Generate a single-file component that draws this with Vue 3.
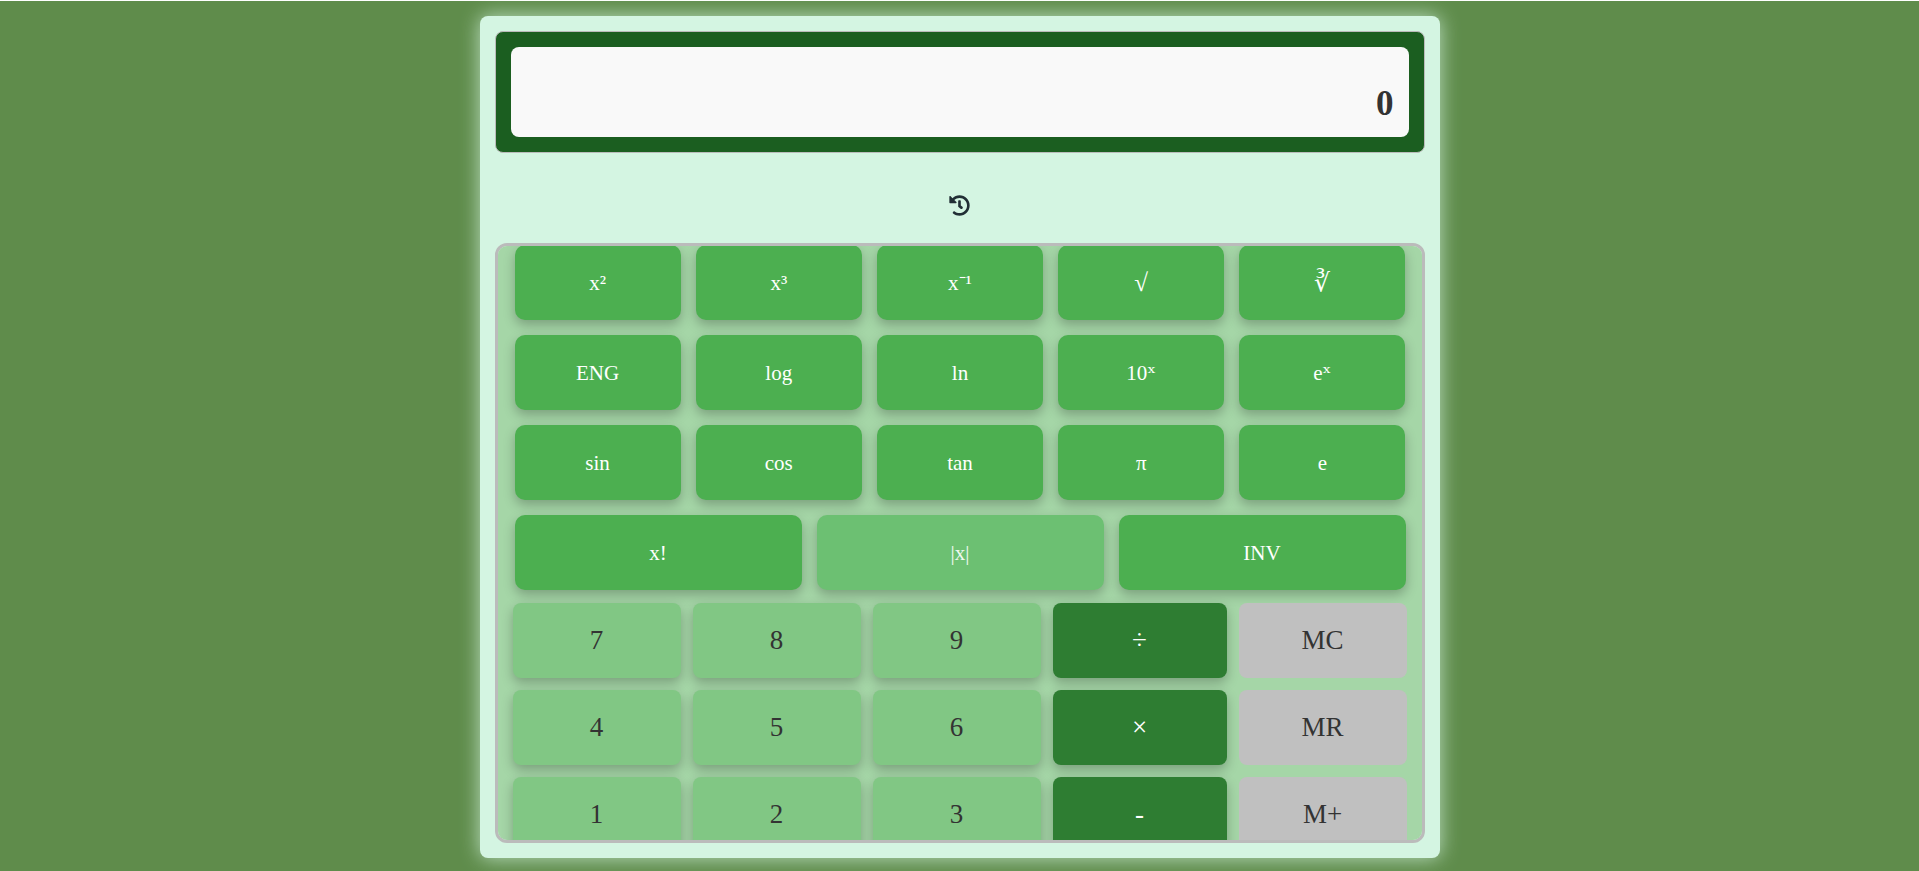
<script setup>
import { onMounted, ref } from 'vue'

const display = ref('0')
const keypad = ref(null)

const scientificKeys = [
  { label: 'x²', name: 'square' },
  { label: 'x³', name: 'cube' },
  { label: 'x⁻¹', name: 'inverse' },
  { label: '√', name: 'square root', root: true },
  { label: '∛', name: 'cube root', root: true },
  { label: 'ENG', name: 'engineering notation' },
  { label: 'log', name: 'log' },
  { label: 'ln', name: 'ln' },
  { label: '10', power: 'ˣ', name: 'ten to the x' },
  { label: 'e', power: 'ˣ', name: 'e to the x' },
  { label: 'sin', name: 'sin' },
  { label: 'cos', name: 'cos' },
  { label: 'tan', name: 'tan' },
  { label: 'π', name: 'pi' },
  { label: 'e', name: 'e' },
]

const mainKeys = [
  ['7', 'digit'], ['8', 'digit'], ['9', 'digit'], ['÷', 'operator'], ['MC', 'memory'],
  ['4', 'digit'], ['5', 'digit'], ['6', 'digit'], ['×', 'operator'], ['MR', 'memory'],
  ['1', 'digit'], ['2', 'digit'], ['3', 'digit'], ['-', 'operator'], ['M+', 'memory'],
]

function press(key, kind) {
  if (kind === 'digit') display.value = display.value === '0' ? key : display.value + key
}

onMounted(() => {
  keypad.value.scrollTop = 16
})
</script>

<template>
  <div class="page">
    <main class="calculator">
      <div class="display">
        <output class="screen">{{ display }}</output>
      </div>

      <div class="toolbar">
        <button class="history" type="button" aria-label="History">
          <svg viewBox="0 0 512 512" aria-hidden="true">
            <path d="M504 255.531c.253 136.64-111.18 248.372-247.82 248.468-59.015.042-113.223-20.53-155.822-54.911-11.077-8.94-11.905-25.541-1.839-35.607l11.267-11.267c8.609-8.609 22.353-9.551 31.891-1.984C173.062 425.135 212.781 440 256 440c101.705 0 184-82.311 184-184 0-101.705-82.311-184-184-184-48.814 0-93.149 18.969-126.068 49.932l50.754 50.754c10.08 10.08 2.941 27.314-11.313 27.314H24c-8.837 0-16-7.163-16-16V38.627c0-14.254 17.234-21.393 27.314-11.314l49.372 49.372C129.209 34.136 189.552 8 256 8c136.81 0 247.747 110.78 248 247.531zm-180.912 78.784l9.823-12.63c8.138-10.463 6.253-25.542-4.21-33.679L288 256.349V152c0-13.255-10.745-24-24-24h-16c-13.255 0-24 10.745-24 24v135.651l65.409 50.874c10.463 8.137 25.541 6.253 33.679-4.21z" />
          </svg>
        </button>
      </div>

      <div ref="keypad" class="keypad">
        <div class="scientific">
          <div class="row five">
            <button
              v-for="key in scientificKeys"
              :key="key.name"
              class="key function"
              :class="{ root: key.root }"
              type="button"
              :aria-label="key.name"
            >{{ key.label }}<span v-if="key.power" class="power">{{ key.power }}</span></button>
          </div>
          <div class="row three">
            <button class="key function" type="button">x!</button>
            <button class="key function active" type="button">|x|</button>
            <button class="key function" type="button">INV</button>
          </div>
        </div>
        <div class="main-keys">
          <button
            v-for="[key, kind] in mainKeys"
            :key="key"
            class="key"
            :class="kind"
            type="button"
            @click="press(key, kind)"
          >{{ key }}</button>
        </div>
      </div>
    </main>
  </div>
</template>

<style>
body {
  margin: 0;
  background: #5f8c4b;
}
</style>

<style scoped>
.page {
  box-sizing: border-box;
  min-height: 100vh;
  padding-top: 15px;
  border-top: 1px solid #fff;
  background: #5f8c4b;
  font-family: "Liberation Serif", "Times New Roman", serif;
}

.calculator {
  box-sizing: border-box;
  width: 100%;
  max-width: 960px;
  margin: 0 auto;
  padding: 15px;
  border-radius: 8px;
  background: #d4f5e2;
  box-shadow: 0 0 20px rgba(212, 245, 226, 0.8);
}

.display {
  padding: 15px;
  border: 1px solid #bbb;
  border-radius: 8px;
  background: #1b5e20;
}

.screen {
  box-sizing: border-box;
  display: flex;
  align-items: flex-end;
  justify-content: flex-end;
  min-height: 90px;
  padding: 15px;
  border-radius: 8px;
  background: #f9f9f9;
  color: #333;
  font-size: 35px;
  font-weight: bold;
  line-height: 36px;
}

.toolbar {
  box-sizing: border-box;
  display: flex;
  align-items: center;
  justify-content: center;
  height: 90px;
  padding-top: 15px;
}

.history {
  display: flex;
  padding: 8px;
  border: 0;
  background: none;
  color: #212f35;
  cursor: pointer;
}

.history svg {
  width: 21px;
  height: 21px;
  fill: currentColor;
}

.keypad {
  box-sizing: border-box;
  display: flex;
  flex-direction: column;
  gap: 13px;
  max-height: 600px;
  padding: 15px;
  border: 3px solid #bbb;
  border-radius: 12px;
  background: #a5d6a7;
  overflow-y: auto;
  scrollbar-width: none;
}

.scientific {
  display: grid;
  gap: 15px;
  padding: 0 1px 0 2px;
}

.row {
  display: grid;
  gap: 15px;
}

.five {
  grid-template-columns: repeat(5, 1fr);
}

.three {
  grid-template-columns: repeat(3, 1fr);
}

.main-keys {
  display: grid;
  grid-template-columns: 28fr 28fr 28fr 29fr 28fr;
  gap: 12px;
}

.key {
  height: 75px;
  padding: 0;
  border: 0;
  border-radius: 8px;
  box-shadow: 0 5px 12px rgba(0, 0, 0, 0.25);
  color: #333;
  font-family: inherit;
  font-size: 27px;
  cursor: pointer;
}

.function {
  border-radius: 10px;
  background: #4caf50;
  color: #fff;
  font-size: 21px;
  line-height: 24px;
}

.root {
  font-size: 25px;
}

.power {
  font-family: "DejaVu Serif", serif;
}

.active {
  background: #6cc072;
  color: #f0f9f1;
}

.digit {
  background: #81c784;
}

.operator {
  background: #2e7d32;
  color: #fff;
}

.memory {
  background: #c0c0c0;
  box-shadow: none;
}
</style>
